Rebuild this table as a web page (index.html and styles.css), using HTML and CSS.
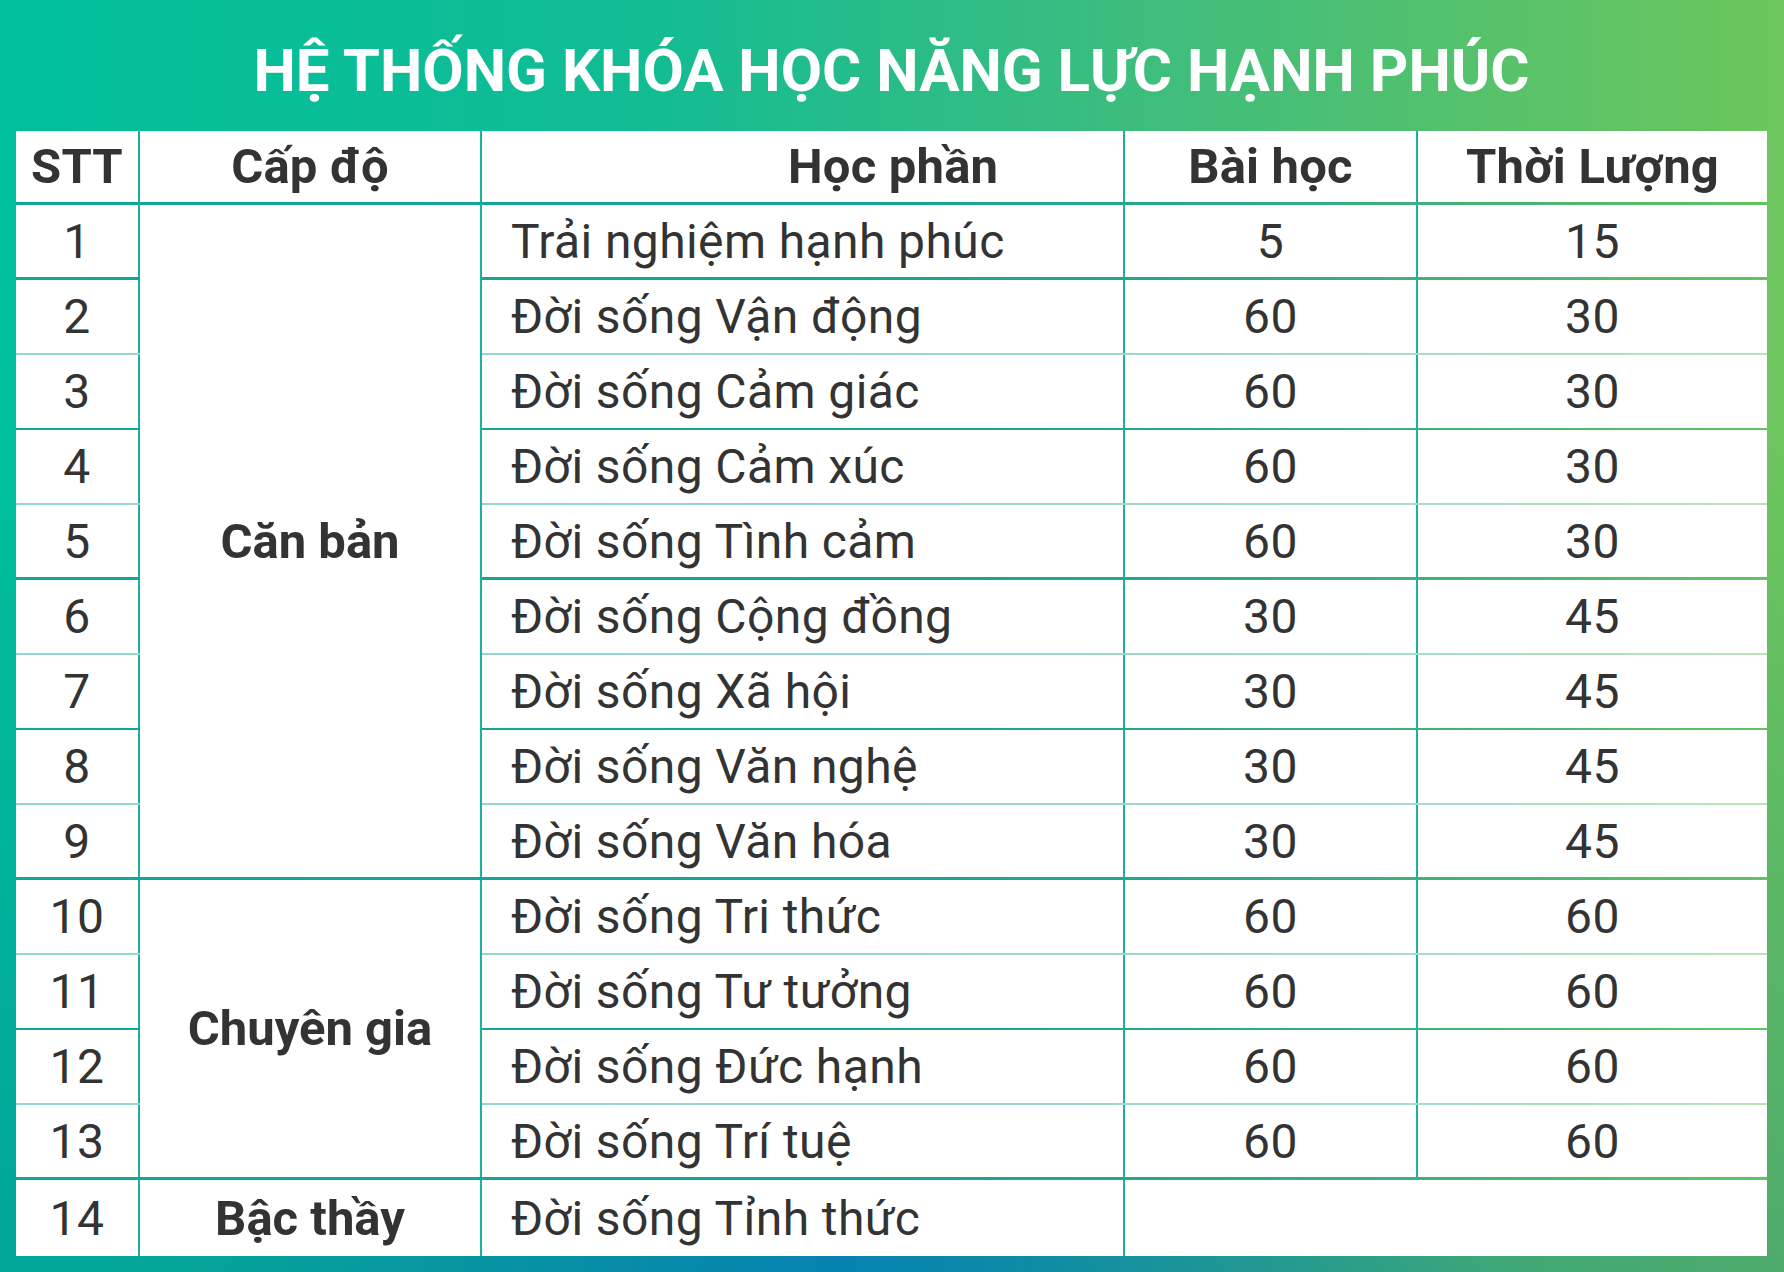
FILE: index.html
```html
<!DOCTYPE html>
<html lang="vi">
<head>
<meta charset="utf-8">
<title>Hệ thống khóa học năng lực hạnh phúc</title>
<link rel="stylesheet" href="styles.css">
</head>
<body>
<div class="frame">
  <h1 class="title">HỆ THỐNG KHÓA HỌC NĂNG LỰC HẠNH PHÚC</h1>
  <div class="table">
    <div class="cell head thick">STT</div>
    <div class="cell head thick">Cấp độ</div>
    <div class="cell head thick subject-head">Học phần</div>
    <div class="cell head thick">Bài học</div>
    <div class="cell head thick last">Thời Lượng</div>

    <div class="cell thick">1</div>
    <div class="cell level lv-basic thick">Căn bản</div>
    <div class="cell subject thick">Trải nghiệm hạnh phúc</div>
    <div class="cell thick">5</div>
    <div class="cell last thick">15</div>

    <div class="cell light">2</div>
    <div class="cell subject light">Đời sống Vận động</div>
    <div class="cell light">60</div>
    <div class="cell last light">30</div>

    <div class="cell medium">3</div>
    <div class="cell subject medium">Đời sống Cảm giác</div>
    <div class="cell medium">60</div>
    <div class="cell last medium">30</div>

    <div class="cell light">4</div>
    <div class="cell subject light">Đời sống Cảm xúc</div>
    <div class="cell light">60</div>
    <div class="cell last light">30</div>

    <div class="cell thick">5</div>
    <div class="cell subject thick">Đời sống Tình cảm</div>
    <div class="cell thick">60</div>
    <div class="cell last thick">30</div>

    <div class="cell light">6</div>
    <div class="cell subject light">Đời sống Cộng đồng</div>
    <div class="cell light">30</div>
    <div class="cell last light">45</div>

    <div class="cell medium">7</div>
    <div class="cell subject medium">Đời sống Xã hội</div>
    <div class="cell medium">30</div>
    <div class="cell last medium">45</div>

    <div class="cell light">8</div>
    <div class="cell subject light">Đời sống Văn nghệ</div>
    <div class="cell light">30</div>
    <div class="cell last light">45</div>

    <div class="cell thick">9</div>
    <div class="cell subject thick">Đời sống Văn hóa</div>
    <div class="cell thick">30</div>
    <div class="cell last thick">45</div>

    <div class="cell light">10</div>
    <div class="cell level lv-expert thick">Chuyên gia</div>
    <div class="cell subject light">Đời sống Tri thức</div>
    <div class="cell light">60</div>
    <div class="cell last light">60</div>

    <div class="cell medium">11</div>
    <div class="cell subject medium">Đời sống Tư tưởng</div>
    <div class="cell medium">60</div>
    <div class="cell last medium">60</div>

    <div class="cell light">12</div>
    <div class="cell subject light">Đời sống Đức hạnh</div>
    <div class="cell light">60</div>
    <div class="cell last light">60</div>

    <div class="cell thick">13</div>
    <div class="cell subject thick">Đời sống Trí tuệ</div>
    <div class="cell thick">60</div>
    <div class="cell last thick">60</div>

    <div class="cell">14</div>
    <div class="cell level">Bậc thầy</div>
    <div class="cell subject">Đời sống Tỉnh thức</div>
    <div class="cell last merged"></div>
  </div>
</div>
</body>
</html>
```

FILE: styles.css
```css
html, body {
  margin: 0;
  padding: 0;
}

body {
  width: 1784px;
  height: 1272px;
  overflow: hidden;
  font-family: Roboto, "Liberation Sans", sans-serif;
}

.frame {
  box-sizing: border-box;
  width: 1784px;
  height: 1272px;
  padding: 0 17px 16px 16px;
  display: flex;
  flex-direction: column;
  background:
    radial-gradient(ellipse 38% 55% at 47% 100%, rgba(4, 128, 178, 0.95) 0%, rgba(4, 128, 178, 0) 100%),
    linear-gradient(to bottom, rgba(0, 110, 160, 0) 0%, rgba(0, 110, 160, 0) 35%, rgba(0, 100, 150, 0.28) 100%),
    linear-gradient(90deg, #00bf9b 0%, #11bc94 35%, #3fbd7c 65%, #6cc65c 100%);
}

.title {
  margin: 0;
  height: 131px;
  display: flex;
  align-items: center;
  justify-content: center;
  padding-top: 10px;
  box-sizing: border-box;
  color: #ffffff;
  font-family: Roboto, "Liberation Sans", sans-serif;
  font-weight: 700;
  font-size: 60px;
  letter-spacing: 0;
}

.table {
  display: grid;
  grid-template-columns: 124px 342px 643px 293px 349px;
  grid-template-rows: 74px repeat(13, 75px) 76px;
  background: linear-gradient(90deg, #0ea898 0%, #14a595 50%, #2aa98a 68%, #47b475 85%, #62c460 100%);
}

.cell {
  box-sizing: border-box;
  background: #ffffff;
  border-right: 2px solid #1db09f;
  display: flex;
  align-items: center;
  justify-content: center;
  color: #333333;
  font-size: 48px;
  letter-spacing: 0.4px;
  font-weight: 400;
  white-space: nowrap;
}

.cell.last {
  border-right: none;
}

.cell.thick {
  margin-bottom: 3px;
}

.cell.medium {
  margin-bottom: 2px;
}

.cell.light {
  margin-bottom: 2px;
  box-shadow: 0 2px 0 rgba(255, 255, 255, 0.55);
}

.head {
  font-weight: 700;
  font-size: 49px;
  letter-spacing: 0.2px;
  color: #333333;
}

.subject-head {
  justify-content: flex-start;
  padding-left: 306px;
}

.subject {
  justify-content: flex-start;
  padding-left: 29px;
}

.level {
  grid-column: 2;
  font-weight: 700;
  font-size: 49px;
  letter-spacing: 0;
}

.lv-basic {
  grid-row: 2 / span 9;
}

.lv-expert {
  grid-row: 11 / span 4;
}

.merged {
  grid-column: 4 / span 2;
}
```
